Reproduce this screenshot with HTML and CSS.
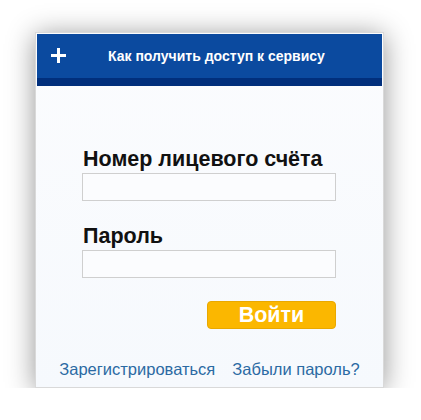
FILE: index.html
```html
<!DOCTYPE html>
<html lang="ru">
<head>
<meta charset="utf-8">
<link rel="stylesheet" href="styles.css">
</head>
<body>
<div class="card">
  <div class="header">
    <span class="plus"></span>
    <span class="header-title">Как получить доступ к сервису</span>
  </div>
  <form class="form">
    <label class="label label-first">Номер лицевого счёта</label>
    <input class="field" type="text">
    <label class="label label-second">Пароль</label>
    <input class="field" type="password">
    <div class="actions">
      <button class="btn" type="button">Войти</button>
    </div>
  </form>
  <div class="links">
    <a class="link">Зарегистрироваться</a>
    <a class="link">Забыли пароль?</a>
  </div>
</div>
</body>
</html>
```
FILE: styles.css
```css
html, body {
  margin: 0;
  padding: 0;
  background: #ffffff;
}
body {
  padding: 32px 0 0 35px;
  font-family: "Liberation Sans", Arial, sans-serif;
}
.card {
  width: 349px;
  height: 356px;
  border: 1px solid #d9d9d9;
  background: linear-gradient(180deg, #fbfcfe 0%, #f6f9fd 100%);
  box-shadow: 0 3px 26px rgba(0, 0, 0, 0.42);
  padding: 1px 1px 0 1px;
  box-sizing: border-box;
  display: flex;
  flex-direction: column;
}
.header {
  height: 52px;
  background: #0b4a9f;
  border-bottom: 8px solid #012f7c;
  box-sizing: border-box;
  display: flex;
  align-items: center;
  padding-left: 14px;
  padding-bottom: 1px;
}
.plus {
  position: relative;
  width: 15px;
  height: 15px;
  flex: none;
}
.plus::before, .plus::after {
  content: "";
  position: absolute;
  background: #ffffff;
}
.plus::before {
  left: 0;
  top: 6px;
  width: 15px;
  height: 3px;
}
.plus::after {
  left: 6px;
  top: 0;
  width: 3px;
  height: 15px;
}
.header-title {
  margin-left: 42px;
  color: #ffffff;
  font-weight: bold;
  font-size: 14px;
}
.form {
  display: flex;
  flex-direction: column;
  padding: 0 46px 0 45px;
  margin: 0;
}
.label {
  font-weight: bold;
  font-size: 21.5px;
  color: #111111;
  line-height: 24px;
  padding-left: 1px;
}
.label-first {
  margin-top: 61px;
}
.label-second {
  margin-top: 23px;
}
.field {
  width: 254px;
  height: 28px;
  box-sizing: border-box;
  border: 1px solid #cfcfcf;
  background: #fbfcfe;
  margin: 2px 0 0 0;
  padding: 0 4px;
  outline: none;
}
.actions {
  display: flex;
  justify-content: flex-end;
  margin-top: 23px;
}
.btn {
  width: 129px;
  height: 28px;
  border: 1px solid #e9a800;
  border-radius: 4px;
  background: #fbb700;
  color: #ffffff;
  font-family: "Liberation Sans", Arial, sans-serif;
  font-weight: bold;
  font-size: 21.5px;
  padding: 0;
  line-height: 26px;
}
.links {
  display: flex;
  justify-content: center;
  gap: 17px;
  margin-top: 31px;
}
.link {
  color: #2b6aa3;
  font-size: 16.5px;
}
```
